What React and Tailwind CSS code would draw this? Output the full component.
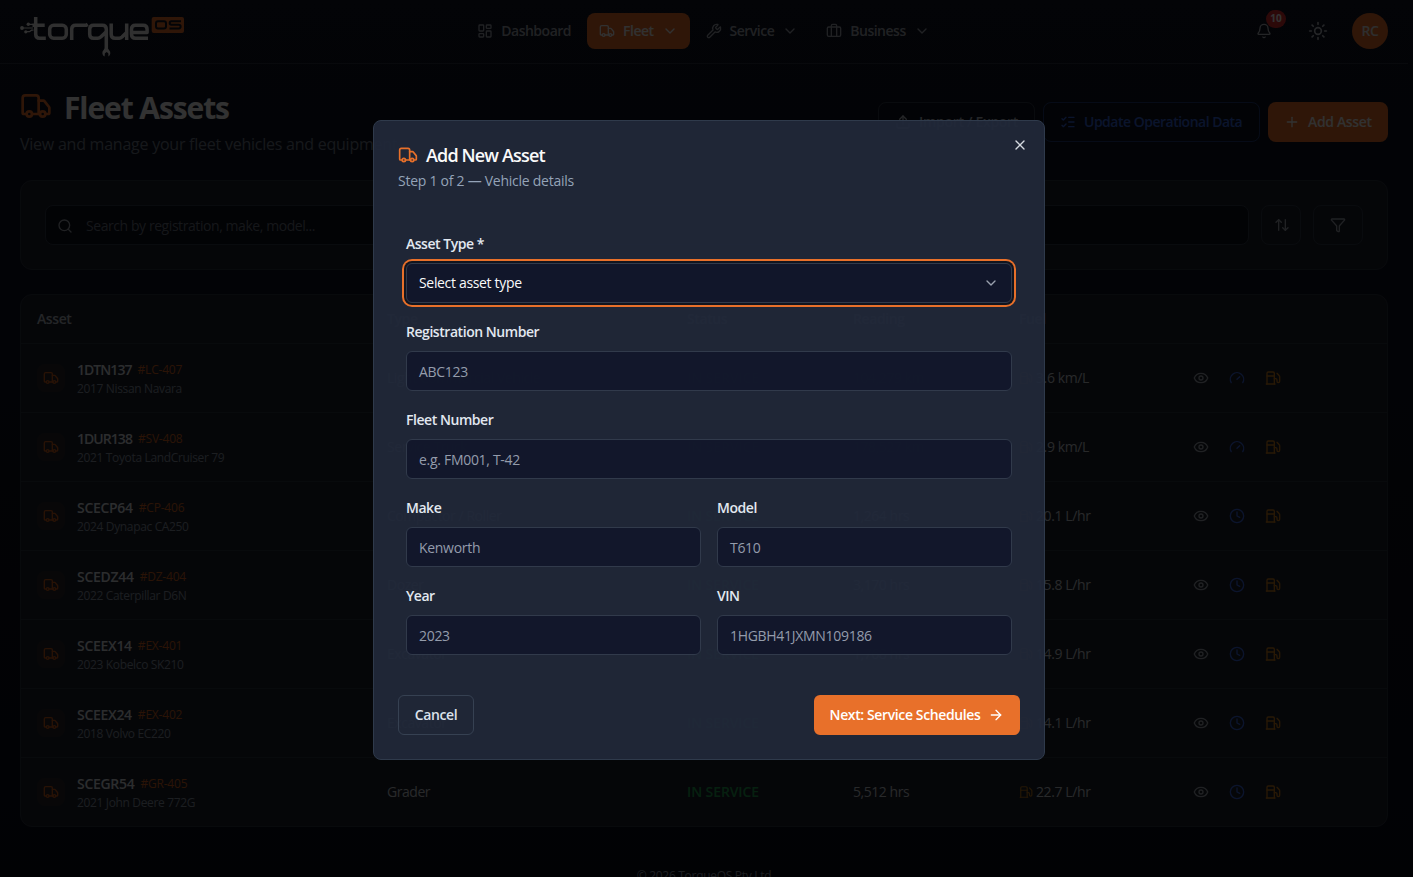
import { Truck, LayoutDashboard, Wrench, Briefcase, ChevronDown, Bell, Sun, Plus, ListChecks, Upload, Search, ArrowUpDown, Filter, Eye, Gauge, Clock, Fuel, X, ArrowRight } from "lucide-react";

const assets = [
  { reg: "1DTN137", no: "#LC-407", desc: "2017 Nissan Navara", type: "Light Commercial Vehicle", reading: "104,279 km", fuel: "3.6 km/L", km: true },
  { reg: "1DUR138", no: "#SV-408", desc: "2021 Toyota LandCruiser 79", type: "Service Truck", reading: "178,527 km", fuel: "2.9 km/L", km: true },
  { reg: "SCECP64", no: "#CP-406", desc: "2024 Dynapac CA250", type: "Compactor / Roller", reading: "1,264 hrs", fuel: "20.1 L/hr" },
  { reg: "SCEDZ44", no: "#DZ-404", desc: "2022 Caterpillar D6N", type: "Dozer", reading: "3,170 hrs", fuel: "15.8 L/hr" },
  { reg: "SCEEX14", no: "#EX-401", desc: "2023 Kobelco SK210", type: "Excavator", reading: "1,768 hrs", fuel: "14.9 L/hr" },
  { reg: "SCEEX24", no: "#EX-402", desc: "2018 Volvo EC220", type: "Excavator", reading: "4,102 hrs", fuel: "14.1 L/hr" },
  { reg: "SCEGR54", no: "#GR-405", desc: "2021 John Deere 772G", type: "Grader", reading: "5,512 hrs", fuel: "22.7 L/hr" },
];

const columns = "grid grid-cols-[350px_300px_166px_166px_1fr] items-center px-4";

function Logo() {
  return (
    <svg width="166" height="42" viewBox="20 16 166 42" fill="none" className="mt-2.5 text-[#f0f0f0]">
      <g stroke="currentColor" strokeWidth="3.5" strokeLinejoin="round">
        <path d="M35.700 17v17.200q0 4 4 4h6.100M32.500 25.200h12.200" />
        <rect x="49.700" y="25.200" width="16.600" height="13" rx="4" />
        <path d="M71.700 40V29.200q0-4 4-4h10.500l1.500-1" />
        <path d="M106.300 50V29.200q0-4-4-4h-8.600q-4 0-4 4v5q0 4 4 4h4.200q1.500 0 2.800-1.200l5-4.600" />
        <path d="M111.200 23.500v10.700q0 4 4 4h4q1.500 0 2.800-1.200l4.600-4.600M126.700 23.500V40" />
        <path d="M148 38.200h-12.500q-4 0-4-4v-5q0-4 4-4h7.600q4 0 4 4v3.200h-15" />
      </g>
      <path d="M22 28h11M28 24.300h5M26 31.700h3.500l2-1.500h2" stroke="currentColor" strokeWidth="1.200" />
      <circle cx="22" cy="28" r="1.900" fill="currentColor" />
      <circle cx="28.300" cy="24.300" r="1.700" fill="currentColor" />
      <circle cx="25.800" cy="31.800" r="1.600" fill="currentColor" />
      <path d="M104.600 56.500a4 4 0 0 1-1.200-6.300l1.300-1.700h3.200l1.300 1.700a4 4 0 0 1-.8 6.200v-2.900l-1.600-1.500-1.900 1.300z" fill="currentColor" />
      <rect x="151.700" y="17" width="32.300" height="16" rx="2" fill="#e8702a" />
      <g stroke="#0f1423" strokeWidth="2">
        <rect x="156" y="21.200" width="10" height="7.300" rx="2" />
        <path d="M181 21.200h-9.500q-1.800 0-1.800 1.800t1.800 1.800h7.300q1.800 0 1.800 1.800t-1.800 1.900h-9.300" />
      </g>
    </svg>
  );
}

function NavItem({ icon: Icon, label, menu, active }) {
  return (
    <div className={`flex h-9 items-center gap-2 rounded-lg px-3 text-sm font-semibold tracking-[-0.5px] ${active ? "bg-[#e8702a] text-[#f5f5f5]" : "text-[#a1a6b0]"}`}>
      <Icon size={16} />
      <span>{label}</span>
      {menu && <ChevronDown size={16} />}
    </div>
  );
}

function Field({ label, placeholder }) {
  return (
    <div className="flex flex-col gap-[9px]">
      <label className="text-sm leading-5 font-semibold tracking-[-0.45px] text-[#e2e8f0]">{label}</label>
      <div className="flex h-10 items-center rounded-md border border-[#313a4b] bg-[#11162a]/90 px-3 pt-0.5 text-sm tracking-[-0.3px] text-[#949cab]">{placeholder}</div>
    </div>
  );
}

function AssetRow({ asset }) {
  return (
    <div className={`${columns} h-[69px] border-t border-[#2b323f] text-sm tracking-[-0.45px] text-[#c8ccd2]`}>
      <div className="flex items-center gap-3">
        <div className="flex size-7 items-center justify-center rounded-lg bg-[#e8702a]/8 text-[#c85a1c]">
          <Truck size={16} />
        </div>
        <div>
          <div className="flex items-center gap-1.5 leading-5">
            <span className={`font-semibold text-[#dcdfe4] ${asset.km ? "tracking-[-0.95px]" : "tracking-[-0.3px]"}`}>{asset.reg}</span>
            <span className="text-xs tracking-[-0.2px] text-[#d2611f]">{asset.no}</span>
          </div>
          <div className="text-xs leading-[17px] tracking-[-0.35px] text-[#8a94a3]">{asset.desc}</div>
        </div>
      </div>
      <div>{asset.type}</div>
      <div className="font-semibold tracking-[-0.1px] text-[#22a050]">IN SERVICE</div>
      <div>{asset.reading}</div>
      <div className="flex items-center">
        <div className="flex w-[174px] items-center gap-[3px] tracking-[-0.4px]">
          <Fuel size={14} className="text-[#b5721a]" />
          <span>{asset.fuel}</span>
        </div>
        <div className="flex gap-5">
          <Eye size={16} className="text-[#a1a6b0]" />
          {asset.km ? <Gauge size={16} className="text-[#3b66e0]" /> : <Clock size={16} className="text-[#3b66e0]" />}
          <Fuel size={16} className="text-[#c97a1a]" />
        </div>
      </div>
    </div>
  );
}

function FleetPage() {
  return (
    <div className="h-full bg-linear-to-b from-[#0f1423] to-[#080b18] pr-[5px]">
      <header className="grid h-16 grid-cols-[1fr_auto_1fr] items-center border-b border-[#28303d] px-5">
        <Logo />
        <nav className="flex gap-1 pr-px pb-0.5">
          <NavItem icon={LayoutDashboard} label="Dashboard" />
          <NavItem icon={Truck} label="Fleet" menu active />
          <NavItem icon={Wrench} label="Service" menu />
          <NavItem icon={Briefcase} label="Business" menu />
        </nav>
        <div className="flex items-center justify-end pb-0.5 text-[#b5b9c0]">
          <div className="relative mr-9">
            <Bell size={16} />
            <span className="absolute -top-[13px] left-2.5 flex h-[18px] w-5 items-center justify-center rounded-full bg-[#dc2f2f] text-[10px] font-bold text-white">10</span>
          </div>
          <Sun size={20} className="mr-6" />
          <div className="flex size-9 items-center justify-center rounded-full bg-[#e8702a] text-sm font-semibold tracking-[-0.4px] text-[#e5e5e5]">RC</div>
        </div>
      </header>

      <main className="px-5 pt-6">
        <div className="flex items-center justify-between">
          <div>
            <div className="flex h-9 items-center gap-3">
              <Truck size={32} className="text-[#e8702a]" />
              <h1 className="pt-[3px] text-3xl leading-9 font-bold tracking-[-1.1px] text-[#fafafa]">Fleet Assets</h1>
            </div>
            <p className="mt-2 text-base tracking-[-0.24px] text-[#707a88]">View and manage your fleet vehicles and equipment.</p>
          </div>
          <div className="flex gap-2 text-sm font-semibold tracking-[-0.5px]">
            <div className="flex h-10 w-[157px] items-center gap-2 rounded-lg border border-[#303846] px-4 tracking-[-0.3px] whitespace-nowrap text-[#b8bdc5]"><Upload size={16} className="shrink-0" />Import / Export</div>
            <div className="flex h-10 w-[217px] items-center gap-2 rounded-lg border border-[#1f3a75] px-4 whitespace-nowrap text-[#3565dd]"><ListChecks size={16} className="shrink-0" />Update Operational Data</div>
            <div className="flex h-10 w-[120px] items-center gap-2 rounded-lg bg-[#e8702a] px-4 tracking-[-0.35px] whitespace-nowrap text-[#f5f5f5]"><Plus size={16} />Add Asset</div>
          </div>
        </div>

        <section className="mt-6 flex h-[90px] items-center gap-3 rounded-xl border border-[#2b323f] bg-[#1b212c] px-6">
          <div className="flex h-10 flex-1 items-center gap-[13px] rounded-lg border border-[#303846] bg-[#0b0f1b] px-[11px] pt-0.5 text-sm text-[#6b7280]">
            <Search size={16} className="text-[#a1a6b0]" />
            <span className="tracking-[-0.43px]">Search by registration, make, model...</span>
          </div>
          <div className="flex h-10 w-10 items-center justify-center rounded-lg border border-[#303846] pl-px text-[#a1a6b0]"><ArrowUpDown size={16} className="shrink-0" /></div>
          <div className="flex h-10 w-[50px] items-center justify-center rounded-lg border border-[#303846] text-[#a1a6b0]"><Filter size={16} /></div>
        </section>

        <section className="mt-6 rounded-xl border border-[#2b323f] bg-[#1b212c]">
          <div className={`${columns} h-12 text-sm font-semibold tracking-[-0.4px] text-[#b4bac4]`}>
            <div>Asset</div><div>Type</div><div>Status</div><div>Reading</div><div>Fuel</div>
          </div>
          {assets.map((asset) => <AssetRow key={asset.reg} asset={asset} />)}
        </section>
      </main>
      <footer className="mt-[41px] text-center text-xs tracking-[-0.3px] text-[#8a94a3]">© 2026 TorqueOS Pty Ltd</footer>
    </div>
  );
}

function AddAssetDialog() {
  return (
    <div className="relative h-[640px] w-[672px] rounded-lg border border-[#2f3a4b] bg-[#21293a]/93 p-6">
      <X size={16} className="absolute top-4 right-4 text-[#d5d9e0]" />
      <div className="flex items-center gap-2">
        <Truck size={20} className="text-[#e8702a]" />
        <h2 className="text-lg leading-5 font-semibold tracking-[-0.85px] text-[#fafafa]">Add New Asset</h2>
      </div>
      <p className="mt-1.5 text-sm leading-5 tracking-[-0.26px] text-[#94a3b8]">Step 1 of 2 — Vehicle details</p>

      <div className="mt-[43px] flex flex-col gap-[19px] px-2">
        <div className="flex flex-col gap-[9px]">
          <label className="text-sm leading-5 font-semibold tracking-[-0.48px] text-[#e2e8f0]">Asset Type *</label>
          <div className="flex h-10 items-center justify-between rounded-md border border-[#313a4b] bg-[#11162a] px-3 text-sm tracking-[-0.33px] text-[#fafafa] ring-2 ring-[#e8702a] ring-offset-2 ring-offset-[#12151f]">
            <span>Select asset type</span>
            <ChevronDown size={16} className="text-[#9aa1ae]" />
          </div>
        </div>
        <Field label="Registration Number" placeholder="ABC123" />
        <Field label="Fleet Number" placeholder="e.g. FM001, T-42" />
        <div className="grid grid-cols-2 gap-x-4 gap-y-[19px]">
          <Field label="Make" placeholder="Kenworth" />
          <Field label="Model" placeholder="T610" />
          <Field label="Year" placeholder="2023" />
          <Field label="VIN" placeholder="1HGBH41JXMN109186" />
        </div>
      </div>

      <div className="mt-10 flex justify-between text-sm font-semibold">
        <button className="flex h-10 w-[76px] items-center justify-center rounded-md border border-[#364152] tracking-[-0.4px] text-[#dbe1ea]">Cancel</button>
        <button className="flex h-10 w-[206px] items-center justify-center gap-2 rounded-md bg-[#e8702a] tracking-[-0.38px] whitespace-nowrap text-white">Next: Service Schedules<ArrowRight size={16} /></button>
      </div>
    </div>
  );
}

export default function App() {
  return (
    <div className="relative h-[877px] overflow-hidden font-['Open_Sans','Noto_Sans',sans-serif]">
      <FleetPage />
      <div className="absolute inset-0 flex items-center justify-center bg-black/80 pt-[3px] pl-[5px]">
        <AddAssetDialog />
      </div>
    </div>
  );
}
